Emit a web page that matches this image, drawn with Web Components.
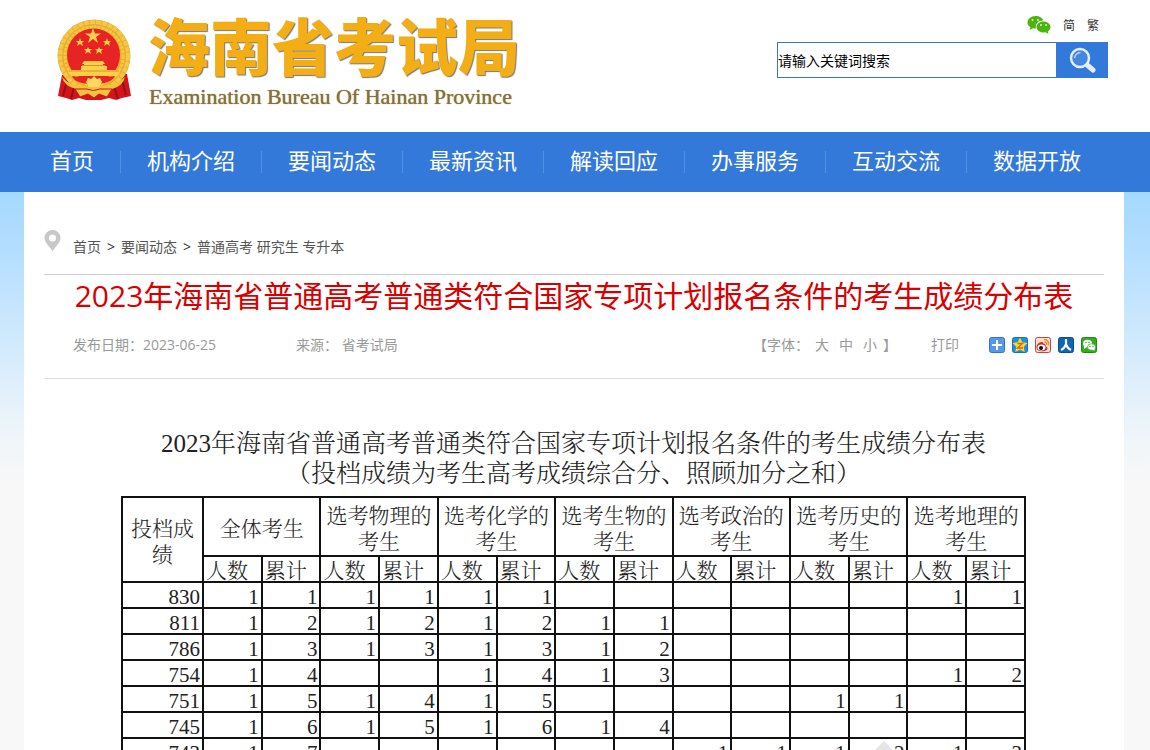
<!DOCTYPE html>
<html lang="zh-CN">
  <head>
    <meta charset="utf-8" />
    <meta name="viewport" content="width=device-width" />
    <title>海南省考试局</title>
    <style>
      html {
        font: 14px "Open Sans", "Noto Sans CJK SC", sans-serif;
        scrollbar-width: none;
      }
      body {
        margin: 0;
        background: #f8f8f8;
      }
      main {
        padding-right: 2px;
        background: linear-gradient(#a5d9ff, #b4deff 60px, #eef5fa 240px, #f8f8f8 290px);
      }
      .page {
        max-width: 1060px;
        margin: 0 auto;
        padding: 0 20px;
        background: #fff;
      }
    </style>
  </head>
  <body>
    <site-header></site-header>
    <site-nav>
      <nav-item>首页</nav-item>
      <nav-item>机构介绍</nav-item>
      <nav-item>要闻动态</nav-item>
      <nav-item>最新资讯</nav-item>
      <nav-item>解读回应</nav-item>
      <nav-item>办事服务</nav-item>
      <nav-item>互动交流</nav-item>
      <nav-item>数据开放</nav-item>
    </site-nav>
    <main>
      <div class="page">
        <bread-crumb></bread-crumb>
        <article-head date="2023-06-25" source="省考试局">
          2023年海南省普通高考普通类符合国家专项计划报名条件的考生成绩分布表
        </article-head>
        <score-table></score-table>
      </div>
    </main>

    <template id="site-header">
      <style>
        :host {
          display: block;
          padding-right: 2px;
          background: #fff;
        }
        .inner {
          display: flex;
          justify-content: space-between;
          align-items: flex-start;
          max-width: 1100px;
          height: 132px;
          margin: 0 auto;
        }
        .brand {
          display: flex;
          gap: 8px;
          padding: 12px 0 0 26px;
        }
        .brand svg {
          flex: none;
        }
        h1 {
          margin: 0;
          color: #f2ae14;
          font: 900 62px/64px "Noto Sans CJK SC", sans-serif;
          text-shadow: 1px 1px 1px #77777c;
          white-space: nowrap;
        }
        .brand p {
          margin: 0;
          padding: 8px 0 0 1px;
          color: #85713a;
          font: 22px/26px "Liberation Serif", serif;
          text-shadow: 0 0 1px #85713a;
          white-space: nowrap;
        }
        .tools {
          display: flex;
          flex-direction: column;
          gap: 6px;
          width: 331px;
          padding: 14px 16px 0 0;
        }
        .langs {
          display: flex;
          justify-content: flex-end;
          align-items: center;
          gap: 12px;
          height: 22px;
          padding-right: 9px;
          font-size: 12px;
        }
        .langs a {
          color: #333;
          text-decoration: none;
        }
        form {
          display: flex;
          height: 36px;
        }
        input {
          flex: 1;
          box-sizing: border-box;
          min-width: 0;
          padding: 0;
          border: 1px solid #3f78b8;
          border-right: 0;
          outline: none;
          color: #000;
          font: inherit;
        }
        button {
          width: 52px;
          padding: 0;
          border: 0;
          background: #3379d9;
        }
        button svg {
          display: block;
          margin: 0 auto;
        }
      </style>
      <header class="inner">
        <div class="brand">
          <svg width="90" height="95" viewBox="0 0 90 95" aria-hidden="true">
            <path d="M12 63 8 84l8 2 6 2 7-2 7 2h15l8-2 7 2 6-2 9-2-4-22z" fill="#d5131b" />
            <path d="M17 69l-4 15M24 75l-3 12M64 75l4 12M72 68l4 15" stroke="#8e1418" stroke-width="2" />
            <circle cx="44" cy="44" r="36.5" fill="#e9ae2c" />
            <circle cx="44" cy="44" r="34" fill="none" stroke="#f3c848" stroke-width="4" stroke-dasharray="5 1" />
            <circle cx="44" cy="44" r="29" fill="none" stroke="#f6c743" stroke-width="3" stroke-dasharray="3 1" />
            <circle cx="43.500" cy="43" r="26.500" fill="#e82323" />
            <g fill="#f8d04a">
              <path d="M43 16l2 5.500h6l-5 3.500 2 6-5-4-5 4 2-6-5-3.500h6z" />
              <path d="M30 26l1 3h3l-2 2 1 3-3-2-3 2 1-3-2-2h3zM57 26l1 3h3l-2 2 1 3-3-2-3 2 1-3-2-2h3zM38 35l1 2h3l-2 2 1 3-3-2-3 2 1-3-2-2h3zM49 35l1 2h3l-2 2 1 3-3-2-3 2 1-3-2-2h3z" />
              <path d="M34 49h19l2 3h-2v2h4v4h13q0 4-3 6H21q-3-3-3-6h13v-4h3v-2h-2z" />
            </g>
            <path d="M32 53.500h23M19 59h50" stroke="#d5912a" />
            <path d="M22 64q21 4 43 0-4 8-22 8t-21-8" fill="#e82323" />
            <path d="M12 65q10 12 31 8 20 4 32-8-2 9-13 12H26q-12-3-14-12" fill="#f4c33e" />
            <path d="M36 70l2-4 3 1 3-3 3 3 3-1 2 4-3 5h-10z" fill="#ffd95d" />
            <path d="M25 77h12q6 3 13 0h12l-5 8-8-3-5 4-6-4-8 3z" fill="#f4c33e" stroke="#d5131b" />
          </svg>
          <div>
            <h1>海南省考试局</h1>
            <p>Examination Bureau Of Hainan Province</p>
          </div>
        </div>
        <div class="tools">
          <div class="langs">
            <svg width="24" height="20" viewBox="0 0 24 20" aria-hidden="true">
              <path d="M8.500 1C4 1 0.500 4 0.500 7.500c0 2 1 3.600 3 4.800L2.500 15l3.500-1.800q1.500.4 3 .3C8 9 11 5.500 16.300 5.500 15.500 3 12.500 1 8.500 1" fill="#4bb50e" />
              <path d="M16.500 6.500c-4 0-7 2.600-7 5.500s3 5.500 7 5.500l2-.3 3 1.800-.7-2.600c1.600-1.100 2.700-2.700 2.700-4.400 0-2.900-3-5.500-7-5.500" fill="#4bb50e" />
              <g fill="#d8f5c4"><circle cx="5.500" cy="5" r="1" /><circle cx="11" cy="5" r="1" /><circle cx="14" cy="10" r="1" /><circle cx="19" cy="10" r="1" /></g>
            </svg>
            <a href="#">简</a>
            <a href="#">繁</a>
          </div>
          <form>
            <input type="text" aria-label="搜索" value="请输入关键词搜索" />
            <button type="submit" aria-label="搜索">
              <svg width="28" height="26" viewBox="0 0 28 26">
                <path d="M18 17l7 6" stroke="#e3effc" stroke-width="5" stroke-linecap="round" />
                <circle cx="12" cy="11" r="9" fill="#4387de" stroke="#e3effc" stroke-width="2.500" />
                <path d="M6.500 11q1-5 6-5.500" fill="none" stroke="#b3d2f5" stroke-width="1.500" />
              </svg>
            </button>
          </form>
        </div>
      </header>
    </template>

    <template id="site-nav">
      <style>
        :host {
          display: block;
          padding-right: 2px;
          background: #3379d9;
        }
        nav {
          display: flex;
          align-items: center;
          max-width: 1100px;
          height: 60px;
          margin: 0 auto;
        }
      </style>
      <nav><slot></slot></nav>
    </template>

    <template id="nav-item">
      <style>
        :host {
          display: block;
          padding: 0 26px;
          border-left: 1px solid #5290e2;
          line-height: 18px;
        }
        :host(:first-child) {
          padding-left: 25px;
          border-color: transparent;
        }
        a {
          color: #fff;
          font-size: 22px;
          text-decoration: none;
          white-space: nowrap;
        }
      </style>
      <a href="#"><slot></slot></a>
    </template>

    <template id="bread-crumb">
      <style>
        :host {
          display: block;
          border-bottom: 1px solid #ccc;
        }
        nav {
          display: flex;
          align-items: flex-start;
          gap: 12px;
          height: 44px;
          padding-top: 38px;
        }
        .path {
          display: flex;
          gap: 6px;
          padding-top: 7px;
          color: #333;
          line-height: 20px;
        }
        a {
          color: #555;
          text-decoration: none;
        }
      </style>
      <nav>
        <svg width="17" height="22" viewBox="0 0 17 22" aria-hidden="true">
          <path d="M8.500 0A8 8 0 0 0 .5 8c0 5 5 8 8 13.500C11.500 16 16.500 13 16.500 8a8 8 0 0 0-8-8m0 4.500a3.500 3.500 0 1 1 0 7 3.500 3.500 0 0 1 0-7" fill="#c8c8c8" />
        </svg>
        <div class="path">
          <a href="#">首页</a><span>&gt;</span><a href="#">要闻动态</a><span>&gt;</span><a href="#">普通高考 研究生 专升本</a>
        </div>
      </nav>
    </template>

    <template id="article-head">
      <style>
        :host {
          display: block;
          border-bottom: 1px solid #ddd;
          color: #999;
        }
        h2 {
          margin: 0;
          color: #d80000;
          font-size: 30px;
          font-weight: 400;
          line-height: 42px;
          text-align: center;
        }
        .meta {
          display: flex;
          align-items: center;
          height: 20px;
          padding: 18px 7px 23px 29px;
          line-height: 20px;
        }
        .date {
          width: 223px;
        }
        .sizes {
          display: flex;
          gap: 10px;
          margin-left: auto;
        }
        .sizes span {
          margin: 0 -4px;
        }
        button {
          padding: 0;
          border: 0;
          background: none;
          color: inherit;
          font: inherit;
        }
        .print {
          margin: 0 30px 0 38px;
        }
        .share {
          display: flex;
          gap: 7px;
        }
        .share a,
        .share svg {
          display: block;
        }
      </style>
      <h2><slot></slot></h2>
      <div class="meta">
        <span class="date"></span>
        <span class="source"></span>
        <div class="sizes">
          <span>【字体：</span><button>大</button><button>中</button><button>小</button><span>】</span>
        </div>
        <button class="print">打印</button>
        <div class="share">
          <a href="#" aria-label="分享">
            <svg width="16" height="16"><rect x=".5" y=".5" width="15" height="15" rx="2" fill="#5598ec" stroke="#3573ca" /><path d="M8 3v10M3 8h10" stroke="#fff" stroke-width="2" /></svg>
          </a>
          <a href="#" aria-label="QQ空间">
            <svg width="16" height="16"><rect x=".5" y=".5" width="15" height="15" rx="2" fill="#2190db" stroke="#0b72bd" /><path d="M8 0.500l2.300 4.800 5.200.7-3.800 3.700 1 5.300L8 12.500 3.300 15l1-5.300L.5 6l5.200-.7z" fill="#ffd62f" /><path d="M5.500 6.500h5l-5 4.500h5.500" fill="none" stroke="#d4660e" stroke-width="1.300" /></svg>
          </a>
          <a href="#" aria-label="新浪微博">
            <svg width="16" height="16"><rect x=".5" y=".5" width="15" height="15" rx="2" fill="#fbe1cf" stroke="#c9463c" /><path d="M7 5C4 5 1 8 1.500 11c.5 4 10.500 4.500 11 .5 0-2-2-2-2-3s0-2-2-1.500C9 6 8 5 7 5" fill="#d9232a" /><ellipse cx="6.500" cy="10.500" rx="4" ry="3" fill="#fff" /><circle cx="6" cy="11" r="2" fill="#111" /><path d="M9 2.500q5 0 5 6M9.500 5q2.500 0 2.500 3" fill="none" stroke="#ee8a22" stroke-width="1.300" /></svg>
          </a>
          <a href="#" aria-label="人人网">
            <svg width="16" height="16"><rect x=".5" y=".5" width="15" height="15" rx="2" fill="#1263b4" stroke="#0a4c94" /><path d="M8 2v5q-1 4-5 6M8 7q1 4 5 6" fill="none" stroke="#fff" stroke-width="2.200" /></svg>
          </a>
          <a href="#" aria-label="微信">
            <svg width="16" height="16"><rect x=".5" y=".5" width="15" height="15" rx="2" fill="#36ab22" stroke="#228a10" /><ellipse cx="6.500" cy="6.500" rx="4.500" ry="3.700" fill="#fff" /><path d="M3 9v3l3-2" fill="#fff" /><ellipse cx="10.500" cy="10" rx="4" ry="3.200" fill="#fff" stroke="#36ab22" stroke-width=".7" /><path d="M11 12l2.500 2v-3" fill="#fff" /><g fill="#36ab22"><circle cx="5" cy="5.500" r=".8" /><circle cx="8" cy="5.500" r=".8" /><circle cx="9" cy="9.500" r=".7" /><circle cx="12" cy="9.500" r=".7" /></g></svg>
          </a>
        </div>
      </div>
    </template>

    <template id="score-table">
      <style>
        :host {
          display: block;
          position: relative;
          padding: 50px 78px 0 77px;
          color: #222;
          font-family: "Liberation Serif", "Noto Serif CJK SC", "Noto Sans CJK SC", serif;
          font-weight: 300;
        }
        .title {
          margin: 0 0 7px;
          font-size: 25px;
          line-height: 30px;
          text-align: center;
        }
        table {
          width: 100%;
          border-collapse: collapse;
          table-layout: fixed;
          font-size: 21px;
          line-height: 20px;
        }
        col:first-child {
          width: 81px;
        }
        th,
        td {
          padding: 4px 0 0;
          border: 2px solid #111;
          font-weight: inherit;
        }
        thead tr:first-child th {
          height: 53px;
          line-height: 26px;
        }
        thead tr:last-child th {
          padding-left: 2px;
          text-align: left;
        }
        tbody th,
        td {
          height: 20px;
          padding-right: 2px;
          text-align: right;
        }
        /* corner of the stamp that runs on below the rows */
        .stamp {
          position: absolute;
          right: 208px;
          bottom: 0;
          opacity: 0.15;
        }
      </style>
      <p class="title">
        2023年海南省普通高考普通类符合国家专项计划报名条件的考生成绩分布表<br />（投档成绩为考生高考成绩综合分、照顾加分之和）
      </p>
      <table>
        <colgroup><col /><col span="14" /></colgroup>
        <thead>
          <tr><th rowspan="2" scope="col">投档成绩</th></tr>
          <tr></tr>
        </thead>
        <tbody></tbody>
      </table>
      <svg class="stamp" width="24" height="24" viewBox="0 0 24 24" aria-hidden="true"><path d="M12 0l12 12-12 12L0 12z" fill="#555" /></svg>
    </template>

    <script type="module">
      class TemplateElement extends HTMLElement {
        constructor() {
          super();
          const template = document.getElementById(this.localName).content;
          this.attachShadow({ mode: "open" }).appendChild(
            template.cloneNode(true)
          );
        }
      }

      customElements.define(
        "site-header",
        class extends TemplateElement {
          connectedCallback() {
            this.shadowRoot
              .querySelector("form")
              .addEventListener("submit", (event) => event.preventDefault());
          }
        }
      );
      customElements.define("site-nav", class extends TemplateElement {});
      customElements.define("nav-item", class extends TemplateElement {});
      customElements.define("bread-crumb", class extends TemplateElement {});

      customElements.define(
        "article-head",
        class extends TemplateElement {
          connectedCallback() {
            const root = this.shadowRoot;
            root.querySelector(".date").textContent =
              `发布日期：${this.getAttribute("date")}`;
            root.querySelector(".source").textContent =
              `来源： ${this.getAttribute("source")}`;
          }
        }
      );

      const groups = [
        "全体考生",
        "选考物理的考生",
        "选考化学的考生",
        "选考生物的考生",
        "选考政治的考生",
        "选考历史的考生",
        "选考地理的考生",
      ];

      // score, then 人数 and 累计 for each group
      const rows = [
        [830, 1, 1, 1, 1, 1, 1, "", "", "", "", "", "", 1, 1],
        [811, 1, 2, 1, 2, 1, 2, 1, 1, "", "", "", "", "", ""],
        [786, 1, 3, 1, 3, 1, 3, 1, 2, "", "", "", "", "", ""],
        [754, 1, 4, "", "", 1, 4, 1, 3, "", "", "", "", 1, 2],
        [751, 1, 5, 1, 4, 1, 5, "", "", "", "", 1, 1, "", ""],
        [745, 1, 6, 1, 5, 1, 6, 1, 4, "", "", "", "", "", ""],
        [743, 1, 7, "", "", "", "", "", "", 1, 1, 1, 2, 1, 3],
      ];

      customElements.define(
        "score-table",
        class extends TemplateElement {
          connectedCallback() {
            const [names, kinds] = this.shadowRoot.querySelectorAll("thead tr");
            names.insertAdjacentHTML(
              "beforeend",
              groups
                .map((name) => `<th colspan="2" scope="colgroup">${name}</th>`)
                .join("")
            );
            kinds.innerHTML = groups
              .map(() => `<th scope="col">人数</th><th scope="col">累计</th>`)
              .join("");
            this.shadowRoot.querySelector("tbody").innerHTML = rows
              .map(
                ([score, ...cells]) =>
                  `<tr><th scope="row">${score}</th>${cells
                    .map((cell) => `<td>${cell}</td>`)
                    .join("")}</tr>`
              )
              .join("");
          }
        }
      );
    </script>
  </body>
</html>
